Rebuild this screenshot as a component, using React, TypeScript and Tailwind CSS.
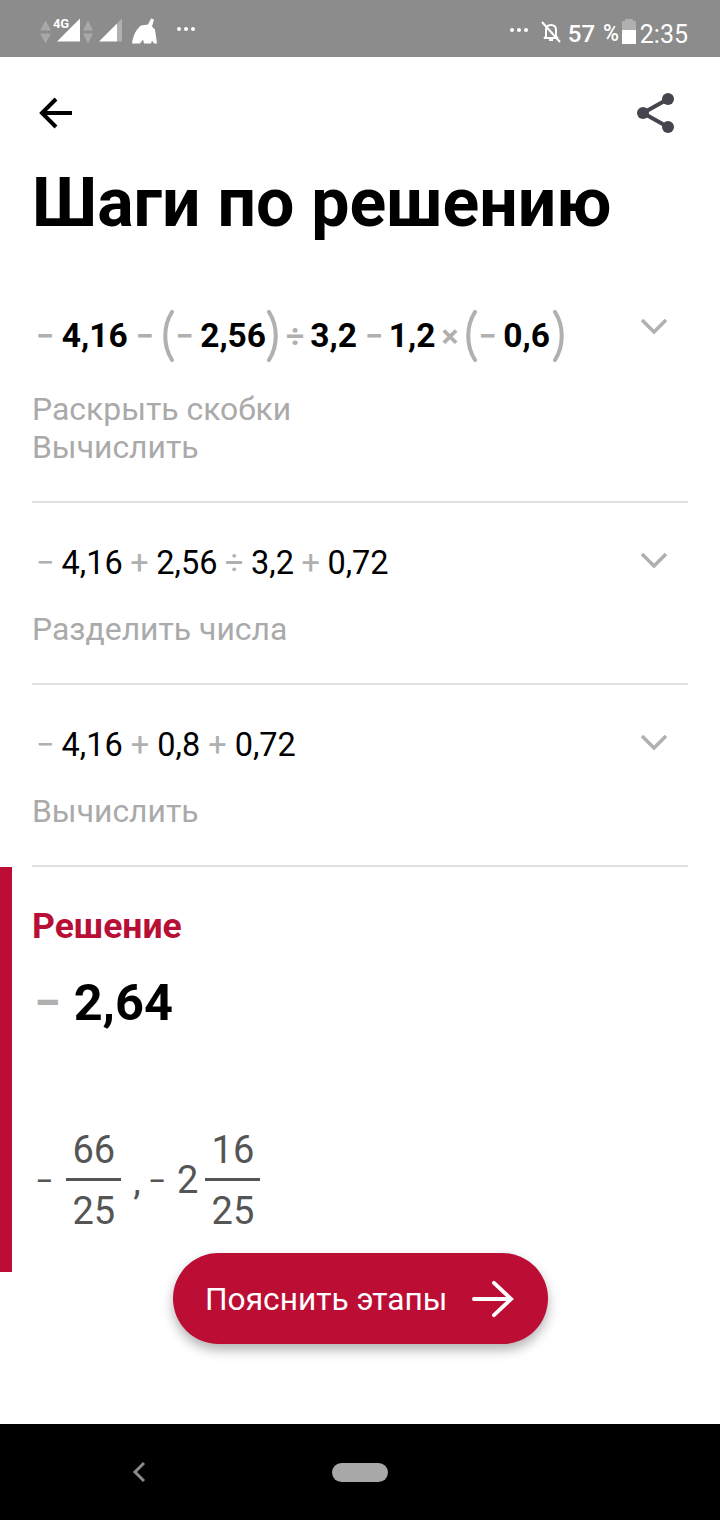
import { ReactNode } from 'react';

const font = { fontFamily: 'Roboto, sans-serif' };

const Op = ({ children, className = '' }: { children: ReactNode; className?: string }) => (
  <span className={`text-[#b0b0b0] ${className}`}>{children}</span>
);

const Paren = ({ side, className = '' }: { side: 'l' | 'r'; className?: string }) => (
  <svg width="14" height="52" viewBox="0 0 14 52" fill="none" className={`shrink-0 ${className}`}>
    <path
      d={side === 'l' ? 'M11 2C2 16 2 36 11 50' : 'M3 2C12 16 12 36 3 50'}
      stroke="#b0b0b0"
      strokeWidth="4"
      strokeLinecap="round"
    />
  </svg>
);

const Chevron = () => (
  <svg width="28" height="18" viewBox="0 0 28 18" fill="none" className="shrink-0">
    <path d="M2 3l12 12L26 3" stroke="#b0b0b0" strokeWidth="3.5" />
  </svg>
);

const Dots = ({ className = '' }: { className?: string }) => (
  <span className={`flex gap-[3px] ${className}`}>
    <i className="w-[4px] h-[4px] rounded-full bg-white" />
    <i className="w-[4px] h-[4px] rounded-full bg-white" />
    <i className="w-[4px] h-[4px] rounded-full bg-white" />
  </span>
);

const Fraction = ({ top, bottom }: { top: string; bottom: string }) => (
  <span className="flex flex-col items-center w-[55px]">
    <span className="leading-[50px] mb-[3px]">{top}</span>
    <span className="h-[3px] w-full bg-[#555]" />
    <span className="leading-[50px] mt-[5px]">{bottom}</span>
  </span>
);

const Step = ({
  math,
  labels,
  className,
  labelClass,
  chevronClass,
}: {
  math: ReactNode;
  labels: string[];
  className: string;
  labelClass: string;
  chevronClass: string;
}) => (
  <div className={`border-b-2 border-[#e0e0e0] ${className}`}>
    <div className="flex justify-between pr-[20px]">
      <div className="flex items-center h-[52px] text-black">{math}</div>
      <div className={chevronClass}><Chevron /></div>
    </div>
    <div className={`text-[31.9px] leading-[38px] text-[#aaaaaa] ${labelClass}`}>
      {labels.map((l) => (
        <div key={l}>{l}</div>
      ))}
    </div>
  </div>
);

const StatusBar = () => (
  <div className="h-[57px] bg-[#8c8c8c] flex items-center justify-between shrink-0 pl-[40px] pr-[32px] text-white">
    <div className="relative flex items-center">
      <svg width="130" height="40" viewBox="40 8.5 130 40" className="shrink-0">
        <path d="M40 30l5.500-10 5.500 10zM40 33l5.500 10 5.500-10z" fill="#a8a8a8" />
        <path d="M57 41l23-23v23z" fill="#fff" />
        <path d="M83 30l5-10 5 10zM83 33l5 10 5-10z" fill="#a8a8a8" />
        <path d="M99 41l18-18v18z" fill="#fff" />
        <path d="M117 23l5-5v23h-5z" fill="#b0b0b0" />
        <path d="M132 43c1-8 4-14 9-18l7-1 3-6 3 1-2 7 3 3 2 14h-3l-2-3-1 3h-7l-1-4-3 4z" fill="#fff" />
      </svg>
      <span className="absolute left-[13px] top-[8px] text-[13px] font-bold leading-none tracking-tight">4G</span>
      <Dots className="ml-[7px]" />
    </div>
    <div className="flex items-center mt-[6px]">
      <Dots className="mr-[13px] -mt-[4px]" />
      <svg width="20" height="22" viewBox="0 0 20 22" fill="none" className="mr-[7px]">
        <path d="M5 16V9c0-3 2-5 5-5s5 2 5 5v7l2 1H3z" stroke="#fff" strokeWidth="2" />
        <path d="M8 19h4" stroke="#fff" strokeWidth="2" />
        <path d="M1 1l18 20" stroke="#fff" strokeWidth="2" />
      </svg>
      <span className="text-[24px] font-medium leading-none mt-[4px]">57</span>
      <span className="text-[24px] font-medium leading-none ml-[7px] mt-[2px] scale-x-90">%</span>
      <span className="ml-[2px] w-[14px] h-[25px] flex flex-col justify-end">
        <span className="mx-auto w-[8px] h-[2px] bg-[#b0b0b0]" />
        <span className="h-[9px] bg-[#b0b0b0] rounded-t-[1px]" />
        <span className="h-[14px] bg-white" />
      </span>
      <span className="text-[25px] leading-none ml-[4px] mt-[6px]">2:35</span>
    </div>
  </div>
);

export default function App() {
  return (
    <div className="relative w-[720px] h-[1520px] bg-white flex flex-col overflow-hidden" style={font}>
      <StatusBar />

      <div className="flex-1 flex flex-col">
        <div className="flex items-center justify-between h-[112px] pl-[38px] pr-[44px] shrink-0">
          <svg width="36" height="34" viewBox="0 0 36 34" fill="none">
            <path d="M34 17H4M18 3L4 17l14 14" stroke="#000" strokeWidth="4" />
          </svg>
          <svg width="40" height="42" viewBox="0 0 40 42">
            <path d="M32 7L7 21l25 14" stroke="#45454d" strokeWidth="4" fill="none" />
            <circle cx="32" cy="7" r="6" fill="#45454d" />
            <circle cx="7" cy="21" r="6" fill="#45454d" />
            <circle cx="32" cy="35" r="6" fill="#45454d" />
          </svg>
        </div>

        <h1 className="text-[68px] font-bold leading-[70px] text-black pl-[32px] -mt-[1px]">Шаги по решению</h1>

        <div className="px-[32px] mt-[72px]">
          <Step
            className="h-[193px]"
            chevronClass="mt-[7px]"
            labelClass="mt-[28px]"
            labels={['Раскрыть скобки', 'Вычислить']}
            math={
              <span className="flex items-center font-bold text-[33.5px]">
                <Op className="ml-[4px] mr-[8px] text-[32px]">−</Op>4,16<Op className="mx-[8px] text-[32px]">−</Op>
                <Paren side="l" /><Op className="mr-[7px] text-[32px]">−</Op>2,56<Paren side="r" />
                <Op className="mx-[6px] text-[32px]">÷</Op>3,2<Op className="ml-[8px] mr-[6px] text-[32px]">−</Op>1,2
                <Op className="mx-[6px] text-[32px]">×</Op>
                <Paren side="l" /><Op className="mr-[7px] text-[32px]">−</Op>0,6<Paren side="r" className="ml-[2px]" />
              </span>
            }
          />
          <Step
            className="h-[182px] pt-[34px]"
            chevronClass="mt-[14px]"
            labelClass="mt-[21px]"
            labels={['Разделить числа']}
            math={
              <span className="flex items-center text-[32.5px]">
                <Op className="ml-[4px] mr-[7px]">−</Op>4,16<Op className="mx-[7.5px]">+</Op>2,56<Op className="mx-[7.5px]">÷</Op>3,2
                <Op className="mx-[7.5px]">+</Op>0,72
              </span>
            }
          />
          <Step
            className="h-[182px] pt-[34px]"
            chevronClass="mt-[14px]"
            labelClass="mt-[21px]"
            labels={['Вычислить']}
            math={
              <span className="flex items-center text-[32.5px]">
                <Op className="ml-[4px] mr-[7px]">−</Op>4,16<Op className="mx-[8px]">+</Op>0,8<Op className="mx-[8px]">+</Op>0,72
              </span>
            }
          />
        </div>

        <div className="border-l-[12px] border-[#bc0d35] h-[405px] pl-[21px] pt-[39px]">
          <div className="text-[35.5px] font-bold leading-[40px] text-[#b80f36] -ml-[1px]">Решение</div>
          <div className="flex items-center text-[50.5px] font-bold leading-[56px] text-black mt-[29px]">
            <Op className="ml-[1px] mr-[13px] text-[48px]">−</Op>2,64
          </div>
          <div className="flex items-center text-[38px] text-[#555] mt-[93px] h-[113px]">
            <span className="ml-[2px] mr-[13px] text-[32px]">−</span>
            <Fraction top="66" bottom="25" />
            <span className="ml-[12px] mt-[2px]">,</span>
            <span className="ml-[7px] text-[32px]">−</span>
            <span className="ml-[11px] mr-[7px]">2</span>
            <Fraction top="16" bottom="25" />
          </div>
        </div>
      </div>

      <div className="h-[96px] bg-black shrink-0 flex items-center justify-center">
        <svg width="16" height="24" viewBox="0 0 16 24" fill="none" className="absolute left-[131px]">
          <path d="M13 3l-9 9 9 9" stroke="#8a8a8a" strokeWidth="3" />
        </svg>
        <span className="w-[56px] h-[19px] rounded-full bg-[#a8a8a8]" />
      </div>

      <button className="absolute left-[173px] top-[1253px] w-[375px] h-[91px] rounded-full bg-[#bc0d35] shadow-[0_6px_12px_rgba(0,0,0,0.3)] flex items-center pl-[32px] text-white text-[31.7px] pt-[2px]">
        Пояснить этапы
        <svg width="42" height="40" viewBox="0 0 44 40" fill="none" className="ml-[25px] -mt-[2px]">
          <path d="M2 20h38M23 3l18 17-18 17" stroke="#fff" strokeWidth="4" strokeLinecap="round" />
        </svg>
      </button>
    </div>
  );
}
